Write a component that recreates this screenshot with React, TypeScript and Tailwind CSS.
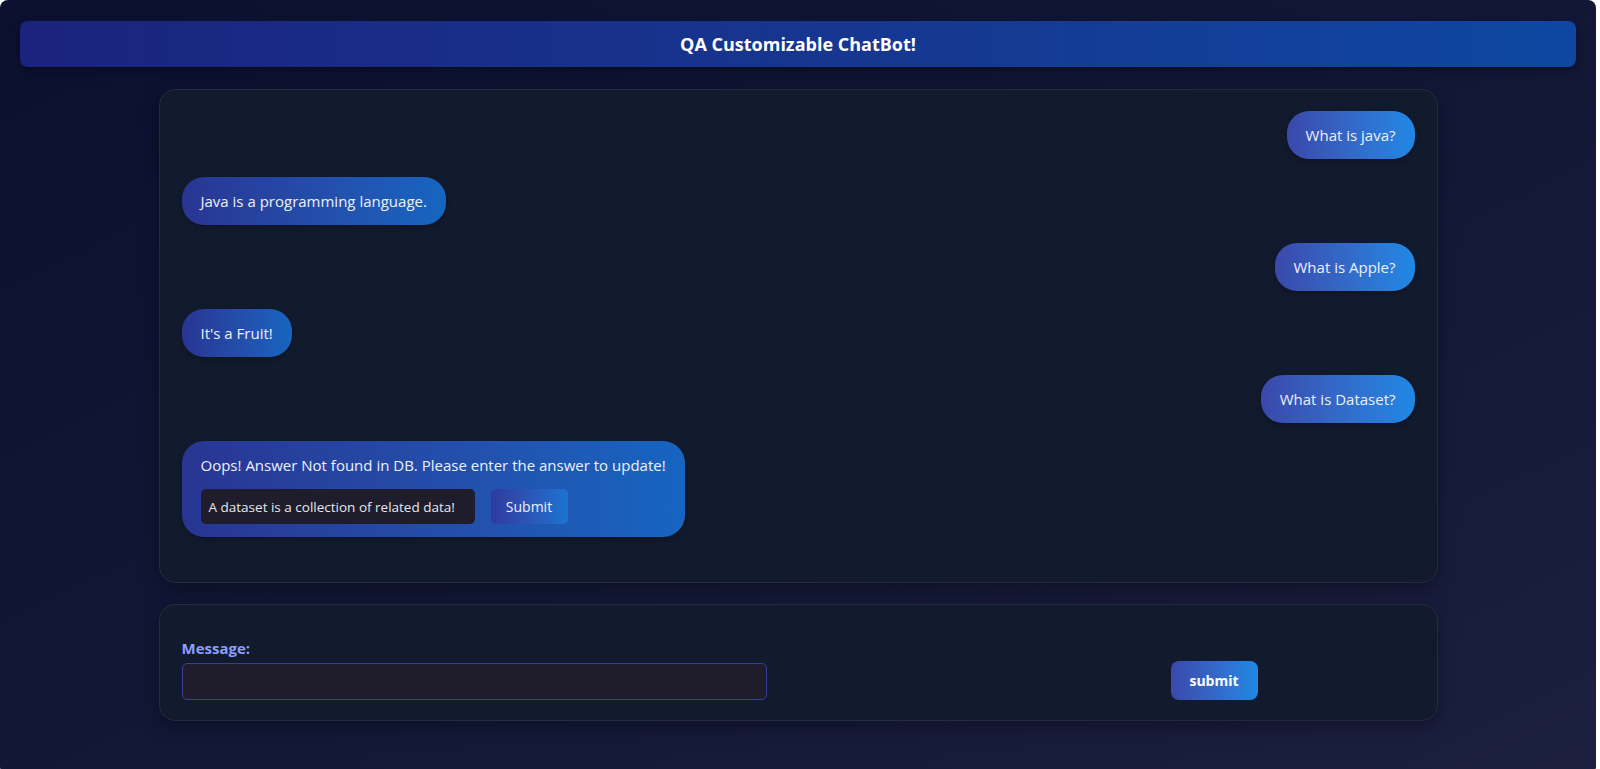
import React from "react";

const font = { fontFamily: '"Open Sans", "Noto Sans", sans-serif' };

function UserBubble({ text }: { text: string }) {
  return (
    <div className="flex justify-end">
      <div className="rounded-[22px] bg-gradient-to-r from-[#3949ab] to-[#1e88e5] px-[19px] py-[12px] text-[15px] leading-[24px] text-[#eef0fb] shadow-[0_2px_6px_rgba(0,0,0,0.25)]">
        {text}
      </div>
    </div>
  );
}

function BotBubble({ children }: { children: React.ReactNode }) {
  return (
    <div className="flex justify-start">
      <div className="rounded-[22px] bg-gradient-to-r from-[#283593] to-[#1565c0] px-[19px] py-[12px] text-[15px] leading-[24px] text-[#eef0fb] shadow-[0_2px_6px_rgba(0,0,0,0.25)]">
        {children}
      </div>
    </div>
  );
}

export default function App() {
  return (
    <div className="min-h-screen w-full bg-white" style={font}>
      <div className="w-[1596px] min-h-[775px] rounded-lg bg-gradient-to-br from-[#0b1030] via-[#121736] to-[#1c1f40] px-5 pt-[21px]">
        <div className="flex h-[46px] items-center justify-center rounded-lg bg-gradient-to-r from-[#1a237e] to-[#0d47a1] shadow-[0_4px_10px_rgba(0,0,0,0.35)]">
          <h1 className="text-[18px] font-bold text-white">QA Customizable ChatBot!</h1>
        </div>

        <div className="mx-auto mt-[22px] w-[1279px] rounded-2xl border border-[#222b40] bg-[#121a2e] px-[22px] pt-[21px] pb-[45px] shadow-[0_6px_18px_rgba(0,0,0,0.35)]">
          <div className="flex flex-col gap-[18px]">
            <UserBubble text="What is java?" />
            <BotBubble>Java is a programming language.</BotBubble>
            <UserBubble text="What is Apple?" />
            <BotBubble>It's a Fruit!</BotBubble>
            <UserBubble text="What is Dataset?" />
            <BotBubble>
              <div>Oops! Answer Not found in DB. Please enter the answer to update!</div>
              <div className="mt-[12px] mb-px flex items-center gap-4">
                <div className="flex h-[35px] w-[274px] items-center rounded-[5px] bg-[#1f1d2c] px-[8px] text-[13.5px] text-[#e6e6ee]">
                  A dataset is a collection of related data!
                </div>
                <button className="h-[35px] w-[77px] rounded-[5px] bg-gradient-to-r from-[#2f3a9e] to-[#1a73d0] text-[14px] text-[#eef0fb]">
                  Submit
                </button>
              </div>
            </BotBubble>
          </div>
        </div>

        <div className="mx-auto mt-[21px] w-[1279px] rounded-2xl border border-[#222b40] bg-[#121a2e] px-[22px] pt-[31px] pb-[20px] shadow-[0_6px_18px_rgba(0,0,0,0.35)]">
          <div className="flex items-end">
            <div className="flex w-[585px] flex-col">
              <label className="mb-[3px] text-[15px] font-bold leading-[24px] text-[#8c9eff]">Message:</label>
              <div className="h-[37px] w-full rounded-[5px] border border-[#34409a] bg-[#1f1d2c]" />
            </div>
            <button className="ml-[404px] h-[39px] w-[87px] rounded-lg bg-gradient-to-r from-[#3949ab] to-[#1e88e5] text-[14px] font-bold text-white">
              submit
            </button>
          </div>
        </div>
      </div>
    </div>
  );
}
